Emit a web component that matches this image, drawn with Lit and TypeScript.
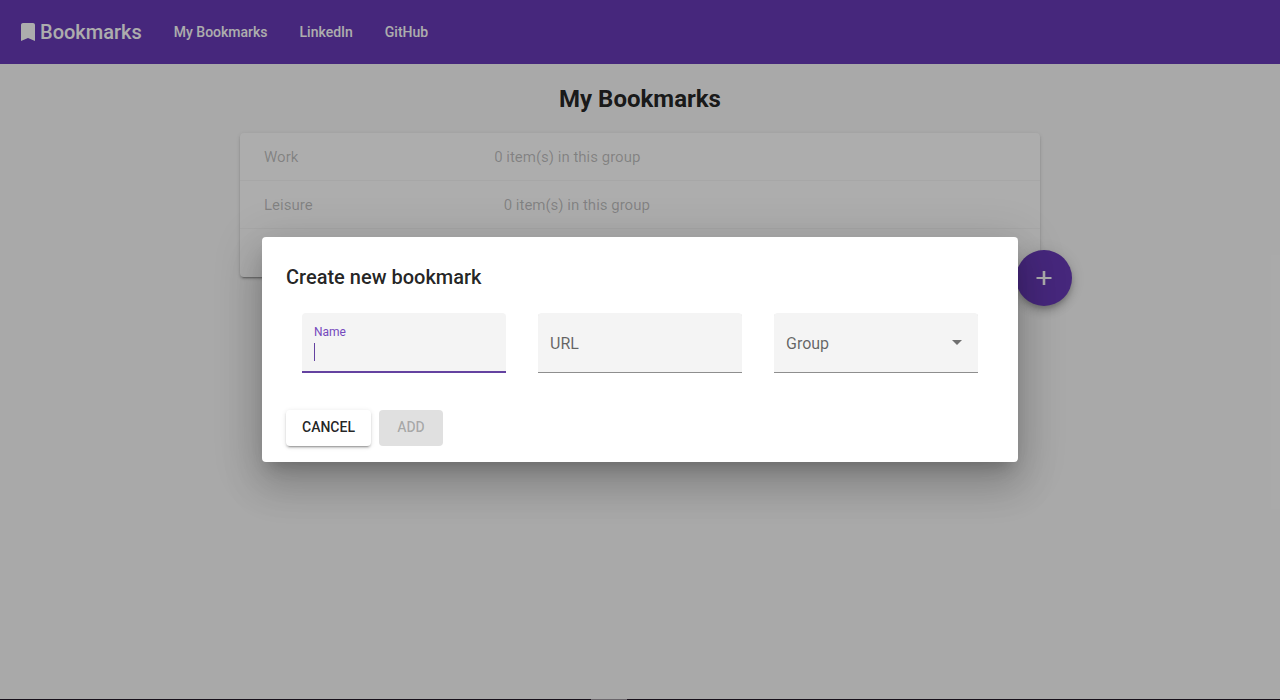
import { LitElement, html, css } from "lit";
import { customElement, state } from "lit/decorators.js";

interface BookmarkGroup {
  name: string;
  summary: string;
}

@customElement("bookmark-groups")
class BookmarkGroups extends LitElement {
  static styles = css`
    :host {
      display: block;
      position: relative;
    }
    .list {
      margin: 0;
      padding: 0;
      list-style: none;
      background: #fff;
      border-radius: 4px;
      box-shadow: 0 3px 1px -2px rgba(0, 0, 0, 0.2),
        0 2px 2px 0 rgba(0, 0, 0, 0.14), 0 1px 5px 0 rgba(0, 0, 0, 0.12);
    }
    .row {
      box-sizing: border-box;
      display: flex;
      align-items: center;
      height: 48px;
      padding: 0 24px;
      font-size: 15px;
      color: rgba(0, 0, 0, 0.26);
    }
    .row + .row {
      box-shadow: 0 -1px 0 rgba(0, 0, 0, 0.03);
    }
    .name {
      flex: 1 1 auto;
      margin-right: 16px;
    }
    .summary {
      flex: 2 1 auto;
      margin-right: 16px;
    }
    .fab {
      position: absolute;
      right: -32px;
      bottom: -29px;
      display: grid;
      place-items: center;
      width: 56px;
      height: 56px;
      padding: 0;
      border: 0;
      border-radius: 50%;
      background: #673ab7;
      color: #fff;
      box-shadow: 0 3px 5px -1px rgba(0, 0, 0, 0.2),
        0 6px 10px 0 rgba(0, 0, 0, 0.14), 0 1px 18px 0 rgba(0, 0, 0, 0.12);
    }
    .icon {
      width: 24px;
      height: 24px;
      fill: currentColor;
    }
  `;

  @state() private groups: BookmarkGroup[] = [
    { name: "Work", summary: "0 item(s) in this group" },
    { name: "Leisure", summary: "0 item(s) in this group" },
    { name: "", summary: "" },
  ];

  render() {
    return html`
      <ul class="list">
        ${this.groups.map(
          (g) => html`<li class="row">
            <span class="name">${g.name}</span>
            <span class="summary">${g.summary}</span>
          </li>`
        )}
      </ul>
      <button class="fab" type="button">
        <svg class="icon" viewBox="0 0 24 24" aria-hidden="true">
          <path
            d="M19.5 13.1h-6.2V19h-2.6v-5.9H4.5v-2.2h6.2V5h2.6v5.9h6.2z"
          />
        </svg>
      </button>
    `;
  }
}

@customElement("bookmark-dialog")
class BookmarkDialog extends LitElement {
  static styles = css`
    :host {
      display: block;
      box-sizing: border-box;
      width: min(756px, 90%);
      padding: 24px 24px 16px;
      border-radius: 4px;
      background: #fff;
      color: rgba(0, 0, 0, 0.87);
      box-shadow: 0 11px 15px -7px rgba(0, 0, 0, 0.2),
        0 24px 38px 3px rgba(0, 0, 0, 0.14),
        0 9px 46px 8px rgba(0, 0, 0, 0.12);
    }
    .title {
      margin: 0 0 20px;
      font-size: 20px;
      line-height: 32px;
      font-weight: 500;
    }
    .fields {
      display: grid;
      grid-template-columns: repeat(3, minmax(0, 1fr));
      gap: 32px;
      padding: 0 16px;
    }
    .field {
      display: grid;
      grid-template-columns: minmax(0, 1fr);
      box-sizing: border-box;
      height: 60px;
      border-radius: 4px 4px 0 0;
      background: #f4f4f4;
      box-shadow: inset 0 -1px 0 #8e8e8e;
    }
    .field > * {
      grid-area: 1 / 1;
    }
    .label {
      align-self: center;
      padding: 2px 12px 0;
      font-size: 16px;
      line-height: 20px;
      color: rgba(0, 0, 0, 0.6);
      pointer-events: none;
    }
    .control {
      box-sizing: border-box;
      width: 100%;
      height: 100%;
      margin: 0;
      padding: 20px 12px 4px;
      border: 0;
      outline: 0;
      background: transparent;
      font: inherit;
      font-size: 16px;
      appearance: none;
    }
    .active {
      box-shadow: inset 0 -2px 0 #6442a0;
    }
    .active .label {
      align-self: start;
      padding-top: 9px;
      font-size: 12px;
      color: #7449bd;
    }
    .active .control {
      caret-color: transparent;
      background: linear-gradient(#6442a0, #6442a0) 12px 30px / 1px 18px
        no-repeat;
    }
    .arrow {
      align-self: center;
      justify-self: end;
      width: 10px;
      height: 5px;
      margin: 0 16px 2px 0;
      fill: rgba(0, 0, 0, 0.54);
      pointer-events: none;
    }
    .actions {
      display: flex;
      gap: 8px;
      margin-top: 37px;
    }
    .button {
      min-width: 64px;
      height: 36px;
      padding: 0 16px 2px;
      border: 0;
      border-radius: 4px;
      background: #fff;
      color: inherit;
      font: inherit;
      font-size: 14px;
      font-weight: 500;
      box-shadow: 0 3px 1px -2px rgba(0, 0, 0, 0.2),
        0 2px 2px 0 rgba(0, 0, 0, 0.14), 0 1px 5px 0 rgba(0, 0, 0, 0.12);
    }
    .button:disabled {
      background: #e0e0e0;
      color: rgba(0, 0, 0, 0.26);
      box-shadow: none;
    }
  `;

  render() {
    return html`
      <form>
        <h2 class="title">Create new bookmark</h2>
        <div class="fields">
          <div class="field active">
            <input class="control" id="name" type="text" autocomplete="off" />
            <label class="label" for="name">Name</label>
          </div>
          <div class="field">
            <input class="control" id="url" type="text" autocomplete="off" />
            <label class="label" for="url">URL</label>
          </div>
          <div class="field">
            <select class="control" id="group">
              <option value=""></option>
            </select>
            <label class="label" for="group">Group</label>
            <svg class="arrow" viewBox="0 0 10 5" aria-hidden="true">
              <path d="M0 0h10L5 5z" />
            </svg>
          </div>
        </div>
        <div class="actions">
          <button class="button" type="button">CANCEL</button>
          <button class="button" type="submit" disabled>ADD</button>
        </div>
      </form>
    `;
  }
}

@customElement("app-root")
class AppRoot extends LitElement {
  static styles = css`
    :host {
      display: flex;
      flex-direction: column;
      min-height: 100vh;
      font-family: Roboto, "Liberation Sans", sans-serif;
      color: rgba(0, 0, 0, 0.87);
    }
    .page {
      position: relative;
      flex: 1;
      background: #fafafa;
    }
    .toolbar {
      display: flex;
      align-items: center;
      height: 64px;
      padding: 0 16px;
      background: #673ab7;
      color: #fff;
    }
    .brand {
      display: flex;
      align-items: center;
      margin-right: 16px;
      font-size: 20px;
      font-weight: 500;
    }
    .icon {
      width: 24px;
      height: 24px;
      fill: currentColor;
    }
    .nav {
      display: flex;
    }
    .link {
      padding: 0 16px;
      color: inherit;
      font-size: 14px;
      font-weight: 500;
      line-height: 36px;
      text-decoration: none;
    }
    .content {
      max-width: 800px;
      margin: 0 auto;
    }
    .heading {
      margin: 0;
      padding: 19px 0 18px;
      font-size: 24px;
      line-height: 32px;
      font-weight: 700;
      text-align: center;
    }
    .backdrop {
      position: absolute;
      inset: 0;
      display: grid;
      justify-items: center;
      align-items: center;
      background: rgba(0, 0, 0, 0.32);
    }
    .taskbar {
      display: flex;
      justify-content: center;
      height: 1px;
      padding-right: 62px;
      background: #17101a;
    }
    .tab {
      width: 36px;
      background: #6a666b;
    }
  `;

  render() {
    return html`
      <div class="page">
        <header class="toolbar">
          <div class="brand">
            <svg class="icon" viewBox="0 0 24 24" aria-hidden="true">
              <path
                d="M17 3H7c-1.1 0-1.99.9-1.99 2L5 21l7-3 7 3V5c0-1.1-.9-2-2-2z"
              />
            </svg>
            <span>Bookmarks</span>
          </div>
          <nav class="nav">
            <a class="link" href="#bookmarks">My Bookmarks</a>
            <a class="link" href="#linkedin">LinkedIn</a>
            <a class="link" href="#github">GitHub</a>
          </nav>
        </header>
        <main class="content">
          <h1 class="heading">My Bookmarks</h1>
          <bookmark-groups></bookmark-groups>
        </main>
        <div class="backdrop">
          <bookmark-dialog role="dialog"></bookmark-dialog>
        </div>
      </div>
      <div class="taskbar"><span class="tab"></span></div>
    `;
  }
}
